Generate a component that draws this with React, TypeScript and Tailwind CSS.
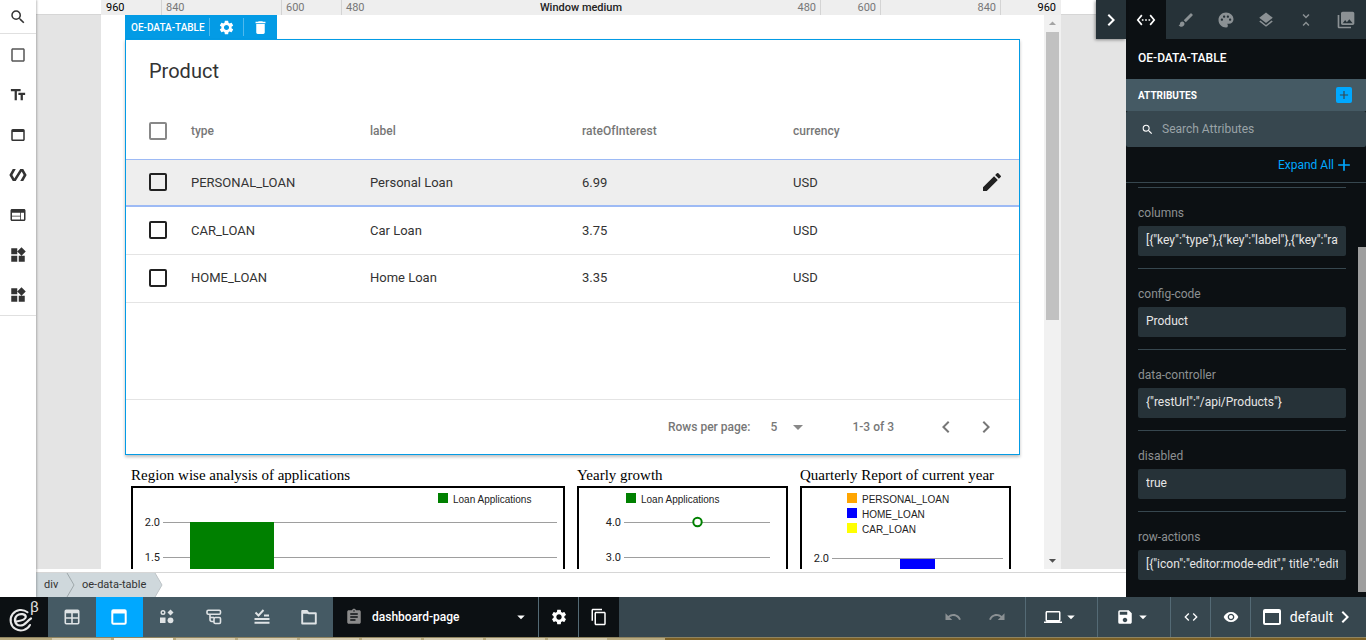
import type { ReactNode } from "react";
import {
  MdAdd,
  MdArrowDropDown,
  MdArrowDropUp,
  MdAssignment,
  MdBrush,
  MdCheckBoxOutlineBlank,
  MdChevronLeft,
  MdChevronRight,
  MdCode,
  MdContentCopy,
  MdDelete,
  MdEdit,
  MdLaptop,
  MdLayers,
  MdPalette,
  MdPhotoLibrary,
  MdPolymer,
  MdRedo,
  MdSave,
  MdSearch,
  MdSettings,
  MdSettingsEthernet,
  MdTextFields,
  MdUndo,
  MdUnfoldLess,
  MdVisibility,
  MdWeb,
  MdWebAsset,
  MdWidgets,
} from "react-icons/md";

const tools: { label: string; icon: ReactNode }[] = [
  { label: "Container", icon: <MdCheckBoxOutlineBlank size={18} className="text-[#555]" /> },
  { label: "Text", icon: <MdTextFields size={18} /> },
  { label: "Panel", icon: <MdWebAsset size={18} /> },
  { label: "Polymer", icon: <MdPolymer size={18} /> },
  { label: "Web", icon: <MdWeb size={18} /> },
  { label: "Widgets", icon: <MdWidgets size={18} /> },
  { label: "More widgets", icon: <MdWidgets size={18} /> },
];

const rows = [
  { type: "PERSONAL_LOAN", label: "Personal Loan", rate: "6.99", currency: "USD", selected: true },
  { type: "CAR_LOAN", label: "Car Loan", rate: "3.75", currency: "USD", selected: false },
  { type: "HOME_LOAN", label: "Home Loan", rate: "3.35", currency: "USD", selected: false },
];

const attributes = [
  { name: "columns", value: '[{"key":"type"},{"key":"label"},{"key":"rateOfInterest"},{"key":"currency"}]' },
  { name: "config-code", value: "Product" },
  { name: "data-controller", value: '{"restUrl":"/api/Products"}' },
  { name: "disabled", value: "true" },
  { name: "row-actions", value: '[{"icon":"editor:mode-edit"," title":"edit","action":"edit"}]' },
];

function ToolRail() {
  return (
    <nav className="z-10 w-9 shrink-0 bg-white text-[#333] shadow-[1px_0_2px_rgba(0,0,0,0.25)]">
      <button aria-label="Search" className="flex h-[34px] w-full items-center justify-center border-b border-[#e0e0e0]">
        <MdSearch size={18} />
      </button>
      <div className="border-b border-[#e0e0e0] pt-px">
        {tools.map((tool) => (
          <button key={tool.label} aria-label={tool.label} className="flex h-10 w-full items-center justify-center">
            {tool.icon}
          </button>
        ))}
      </div>
    </nav>
  );
}

function Ruler() {
  return (
    <div className="h-[15px] shrink-0 bg-white shadow-[inset_0_-1px_0_#d6d6d6]">
      <div className="mx-auto grid h-full max-w-[960px] grid-cols-[60px_120px_60px_1fr_60px_120px_60px] bg-[#eee] text-[11px] leading-[15px] text-[#777]">
        <span className="px-[5px] text-black">960</span>
        <span className="border-l border-[#d4d4d4] px-1">840</span>
        <span className="border-l border-[#d4d4d4] px-1">600</span>
        <span className="flex justify-between border-x border-[#d4d4d4] px-1">
          <span>480</span>
          <span className="font-medium text-[#222]">Window medium</span>
          <span>480</span>
        </span>
        <span className="border-r border-[#d4d4d4] px-1 text-right">600</span>
        <span className="border-r border-[#d4d4d4] px-1 text-right">840</span>
        <span className="px-[5px] text-right text-black">960</span>
      </div>
    </div>
  );
}

const checkboxClass = "block size-[18px] appearance-none rounded-[2px] border-2";

function DataTable() {
  return (
    <section className="border border-[#039be5] bg-white shadow-[0_2px_3px_rgba(0,0,0,0.25)]">
      <h1 className="px-[23px] pt-[17px] text-xl leading-7 text-[#333]">Product</h1>
      <div className="mt-[18px] h-[296px]">
        <table className="w-full table-fixed border-collapse text-left text-[13px] text-[#333]">
          <colgroup>
            <col className="w-[65px]" />
            <col className="w-[179px]" />
            <col className="w-[212px]" />
            <col className="w-[211px]" />
            <col />
            <col className="w-14" />
          </colgroup>
          <thead>
            <tr className="h-14 border-b border-[#9dbaf5] text-xs text-[#777]">
              <th className="pl-[23px]">
                <input type="checkbox" aria-label="Select all rows" className={`${checkboxClass} border-[#888]`} />
              </th>
              <th className="font-medium">type</th>
              <th className="font-medium">label</th>
              <th className="font-medium">rateOfInterest</th>
              <th className="font-medium">currency</th>
              <th />
            </tr>
          </thead>
          <tbody>
            {rows.map((row) => (
              <tr
                key={row.type}
                className={row.selected ? "h-[47px] border-b-2 border-[#9dbaf5] bg-[#eee]" : "h-12 border-b border-[#e4e4e4]"}
              >
                <td className="pl-[23px]">
                  <input type="checkbox" aria-label={`Select ${row.type}`} className={`${checkboxClass} border-[#212121]`} />
                </td>
                <td>{row.type}</td>
                <td>{row.label}</td>
                <td>{row.rate}</td>
                <td>{row.currency}</td>
                <td>
                  {row.selected && (
                    <button aria-label="Edit row" className="ml-auto mr-[15px] block text-[#212121]">
                      <MdEdit size={24} />
                    </button>
                  )}
                </td>
              </tr>
            ))}
          </tbody>
        </table>
      </div>
      <footer className="flex h-[55px] items-center justify-end border-t border-[#e4e4e4] pr-[21px] text-xs font-medium text-[#777]">
        <label htmlFor="page-size">Rows per page:</label>
        <span className="ml-5 flex items-center">
          <select id="page-size" className="w-4 appearance-none bg-transparent">
            <option>5</option>
          </select>
          <MdArrowDropDown size={24} className="text-[#888]" />
        </span>
        <span className="ml-[42px]">1-3 of 3</span>
        <button aria-label="Previous page" className="ml-10">
          <MdChevronLeft size={24} />
        </button>
        <button aria-label="Next page" className="ml-4">
          <MdChevronRight size={24} />
        </button>
      </footer>
    </section>
  );
}

const legendText = { fontFamily: '"Liberation Sans", Arial, sans-serif', fontSize: 10, fill: "#222" };
const axisText = { fontFamily: 'Roboto, Arial, sans-serif', fontSize: 11, fill: "#222", textAnchor: "end" as const };

function ChartCard({ title, children }: { title: string; children: ReactNode }) {
  return (
    <figure className="min-w-0">
      <figcaption className="h-[21px] whitespace-nowrap font-['Liberation_Serif',serif] text-[15px] leading-5 text-black">{title}</figcaption>
      <div className="overflow-hidden border-2 border-black">
        <svg width="430" height="240" className="block max-w-none" aria-label={title}>
          {children}
        </svg>
      </div>
    </figure>
  );
}

function Charts() {
  return (
    <div className="mt-[10px] grid grid-cols-[434fr_211fr_211fr] gap-3 pl-[6px] pr-[9px]">
      <ChartCard title="Region wise analysis of applications">
        <rect x="305" y="5" width="10" height="10" fill="#008000" />
        <text x="320" y="15" {...legendText}>Loan Applications</text>
        <path d="M30 34.5H424M30 69.5H424M30 104.5H424" stroke="#9e9e9e" />
        <rect x="57" y="34" width="84" height="200" fill="#008000" />
        <text x="27" y="38" {...axisText}>2.0</text>
        <text x="27" y="73" {...axisText}>1.5</text>
      </ChartCard>
      <ChartCard title="Yearly growth">
        <rect x="47" y="5" width="10" height="10" fill="#008000" />
        <text x="62" y="15" {...legendText}>Loan Applications</text>
        <path d="M45 34.5H191M45 69.5H191M45 104.5H191" stroke="#9e9e9e" />
        <circle cx="118.5" cy="34" r="4.2" fill="#fff" stroke="#008000" strokeWidth="2" />
        <text x="42" y="38" {...axisText}>4.0</text>
        <text x="42" y="73" {...axisText}>3.0</text>
      </ChartCard>
      <ChartCard title="Quarterly Report of current year">
        <rect x="45" y="5" width="10" height="10" fill="#ffa500" />
        <rect x="45" y="20" width="10" height="10" fill="#0000ff" />
        <rect x="45" y="35" width="10" height="10" fill="#ffff00" />
        <text x="60" y="15" {...legendText}>PERSONAL_LOAN</text>
        <text x="60" y="30" {...legendText}>HOME_LOAN</text>
        <text x="60" y="45" {...legendText}>CAR_LOAN</text>
        <path d="M30 70.5H201" stroke="#9e9e9e" />
        <rect x="98" y="71" width="35" height="150" fill="#0000ff" />
        <text x="27" y="74" {...axisText}>2.0</text>
      </ChartCard>
    </div>
  );
}

function Canvas() {
  return (
    <div className="min-h-0 flex-1 overflow-hidden bg-[#e4e4e4]">
      <div className="mx-auto flex h-full max-w-[960px] bg-white">
        <div className="min-w-0 flex-1 overflow-hidden px-6">
          <div className="flex h-6 w-[152px] items-center bg-[#039be5] text-[10px] font-medium text-white">
            <span className="w-[84px] whitespace-nowrap pl-[6px]">OE-DATA-TABLE</span>
            <button aria-label="Settings" className="flex h-[18px] w-[34px] items-center justify-center border-l border-white/30">
              <MdSettings size={17} />
            </button>
            <button aria-label="Delete" className="flex h-[18px] w-[34px] items-center justify-center border-l border-white/30">
              <MdDelete size={17} />
            </button>
          </div>
          <DataTable />
          <Charts />
        </div>
        <div className="flex w-[17px] shrink-0 flex-col items-center bg-[#f1f1f1]">
          <MdArrowDropUp size={17} className="text-[#a3a3a3]" />
          <div className="h-[288px] w-[13px] bg-[#c1c1c1]" />
          <MdArrowDropDown size={17} className="mt-auto text-[#505050]" />
        </div>
      </div>
    </div>
  );
}

function Breadcrumb() {
  return (
    <div className="mt-[3px] flex h-[25px] shrink-0 border-t border-[#d6d6d6] bg-white text-[11px] text-[#333]">
      <div className="relative flex h-full w-[127px] items-center">
        <svg viewBox="0 0 127 24" className="absolute inset-0 size-full" preserveAspectRatio="none" aria-hidden="true">
          <path d="M0 0H119L126 12L119 24H0Z" fill="#cfd8dc" />
          <path d="M31 0L38 12L31 24" fill="none" stroke="#9ea7aa" />
          <path d="M119 0L126 12L119 24" fill="none" stroke="#bdc3c6" />
        </svg>
        <a href="#div" className="relative w-[38px] pl-2">div</a>
        <a href="#oe-data-table" className="relative whitespace-nowrap pl-2">oe-data-table</a>
      </div>
    </div>
  );
}

const panelTabs: { label: string; icon: ReactNode }[] = [
  { label: "Attributes", icon: <MdSettingsEthernet size={20} /> },
  { label: "Style", icon: <MdBrush size={18} /> },
  { label: "Theme", icon: <MdPalette size={18} /> },
  { label: "Layers", icon: <MdLayers size={18} /> },
  { label: "Collapse", icon: <MdUnfoldLess size={18} /> },
  { label: "Assets", icon: <MdPhotoLibrary size={20} /> },
];

function Inspector() {
  return (
    <aside className="relative flex w-60 shrink-0 flex-col bg-[#0c1013] text-white">
      <button
        aria-label="Collapse panel"
        className="absolute right-full top-0 z-10 flex h-[39px] w-[30px] items-center justify-center bg-[#263238] shadow-[-1px_1px_3px_rgba(0,0,0,0.4)]"
      >
        <MdChevronRight size={24} />
      </button>
      <div className="flex h-[39px] bg-[#263238]">
        {panelTabs.map((tab, i) => (
          <button
            key={tab.label}
            aria-label={tab.label}
            className={
              i === 0
                ? "flex flex-1 items-center justify-center bg-[#0c1013] text-white"
                : "flex flex-1 items-center justify-center text-[#8b9194]"
            }
          >
            {tab.icon}
          </button>
        ))}
      </div>
      <h2 className="flex h-10 items-center px-3 pb-0.5 text-xs font-medium">OE-DATA-TABLE</h2>
      <div className="flex h-8 items-center justify-between bg-[#455a64] pl-3 pr-[14px] text-[10px] font-bold">
        <span>ATTRIBUTES</span>
        <button aria-label="Add attribute" className="flex size-4 items-center justify-center rounded-[2px] bg-[#00a8ff] text-[#37474f]">
          <MdAdd size={14} />
        </button>
      </div>
      <label className="flex h-9 items-center rounded-[2px] bg-[#37474f] pl-[15px]">
        <MdSearch size={13} />
        <input
          type="text"
          placeholder="Search Attributes"
          aria-label="Search attributes"
          className="ml-2 w-40 bg-transparent text-xs outline-none placeholder:text-[#9aa3a7]"
        />
      </label>
      <div className="flex h-9 items-center justify-end border-b border-[#37474f] pr-3">
        <button className="flex items-center text-xs text-[#00a8ff]">
          Expand All
          <MdAdd size={20} />
        </button>
      </div>
      <div className="flex min-h-0 flex-1 overflow-hidden">
        <div className="min-w-0 flex-1 pl-3 pr-3 pt-1">
          {attributes.map((attr) => (
            <div key={attr.name} className="border-t border-[#37474f] pb-3 pt-[17px]">
              <label htmlFor={attr.name} className="mb-[5px] block text-xs leading-4 text-[#8d9092]">
                {attr.name}
              </label>
              <input
                id={attr.name}
                type="text"
                defaultValue={attr.value}
                className="block h-[30px] w-full rounded-[2px] bg-[#263238] px-2 pb-0.5 text-xs text-[#e6e6e6] outline-none"
              />
            </div>
          ))}
        </div>
        <div className="flex w-2 flex-col pb-[5px] pt-16">
          <div className="flex-1 bg-[#9e9e9e]" />
        </div>
      </div>
    </aside>
  );
}

function Logo() {
  return (
    <svg width="48" height="40" viewBox="0 0 48 40" aria-label="oe logo">
      <g fill="none" stroke="#e8e8e8" strokeLinecap="round">
        <path d="M27.500 15.300A10.300 10.300 0 1 0 30 28" strokeWidth="2" />
        <path
          d="M16.500 24.500C20 24 25.500 22.800 25.800 20C25.800 17 20 16 17 18.500C13.500 21.500 14.500 28 20 28.500C25.500 28.800 26.500 24 31 21.500"
          strokeWidth="2.200"
        />
      </g>
      <text x="30" y="15" fontSize="15" fill="#e0e0e0" fontFamily="Roboto, sans-serif">β</text>
    </svg>
  );
}

function ModeIcon({ children }: { children: ReactNode }) {
  return (
    <svg width="16" height="16" viewBox="0 0 16 16" fill="none" stroke="currentColor" strokeWidth="1.6" aria-hidden="true">
      {children}
    </svg>
  );
}

const modes: { label: string; icon: ReactNode }[] = [
  {
    label: "Grid",
    icon: (
      <ModeIcon>
        <rect x="1.300" y="1.300" width="13.400" height="13.400" rx="1" />
        <path d="M1 3H15" strokeWidth="2.600" />
        <path d="M8 3V15M1 9H15" />
      </ModeIcon>
    ),
  },
  {
    label: "Page",
    icon: (
      <ModeIcon>
        <rect x="1.300" y="1.300" width="13.400" height="13.400" rx="1" strokeWidth="2" />
        <path d="M1 3H15" strokeWidth="3" />
      </ModeIcon>
    ),
  },
  {
    label: "Components",
    icon: (
      <ModeIcon>
        <circle cx="4" cy="3.500" r="1.800" strokeWidth="1.400" />
        <path d="M11.500 0.500L14.500 3.500L11.500 6.500L8.500 3.500Z" fill="currentColor" stroke="none" />
        <rect x="1" y="8.500" width="5.500" height="5.500" fill="currentColor" stroke="none" />
        <circle cx="11.500" cy="11.300" r="2.900" fill="currentColor" stroke="none" />
      </ModeIcon>
    ),
  },
  {
    label: "Tree",
    icon: (
      <ModeIcon>
        <rect x="1" y="1.200" width="13.500" height="4" rx="1.200" />
        <path d="M4 5.200V10.500Q4 12.500 6 12.500H8" />
        <path d="M4 8.500H8" />
        <rect x="8" y="8.500" width="6.500" height="6" rx="1.200" />
      </ModeIcon>
    ),
  },
  {
    label: "Rules",
    icon: (
      <ModeIcon>
        <path d="M1.500 3.500L4.500 6.500L9.500 1M10 6.500H15M0.500 10H15.500M0.500 13.800H15.500" strokeWidth="1.900" />
      </ModeIcon>
    ),
  },
  {
    label: "Files",
    icon: (
      <ModeIcon>
        <path d="M1.200 2H6L7.500 4.200H14.800V14.500H1.200Z" strokeWidth="1.900" strokeLinejoin="round" />
        <path d="M1.200 3.500H7" strokeWidth="2.500" />
      </ModeIcon>
    ),
  },
];

const cell = "flex h-full items-center justify-center border-l border-[#546a75]";

function BottomBar() {
  return (
    <div className="flex h-10 shrink-0 bg-[#37474f] text-white">
      <div className="w-12 bg-[#0c1013]">
        <Logo />
      </div>
      <div className="flex w-[285px] bg-[#455a64]">
        {modes.map((mode) => (
          <button
            key={mode.label}
            aria-label={mode.label}
            className={
              mode.label === "Page"
                ? "flex flex-1 items-center justify-center bg-[#00a8ff]"
                : "flex flex-1 items-center justify-center text-[#dfe3e5]"
            }
          >
            {mode.icon}
          </button>
        ))}
      </div>
      <div className="flex bg-[#0c1013]">
        <div className="relative flex w-[205px] items-center pl-3">
          <MdAssignment size={18} className="text-[#8b8b8b]" />
          <select aria-label="Page" className="h-full flex-1 appearance-none bg-[#0c1013] pl-[9px] text-xs font-medium outline-none">
            <option>dashboard-page</option>
          </select>
          <MdArrowDropDown size={18} className="pointer-events-none absolute right-2" />
        </div>
        <button aria-label="Page settings" className={`${cell} w-10`}>
          <MdSettings size={18} />
        </button>
        <button aria-label="Copy page" className={`${cell} w-[41px]`}>
          <MdContentCopy size={18} />
        </button>
      </div>
      <div className="ml-auto flex items-center">
        <button aria-label="Undo" className="flex w-11 justify-center text-[#8b9194]">
          <MdUndo size={18} />
        </button>
        <button aria-label="Redo" className="mr-[6px] flex w-11 justify-center text-[#8b9194]">
          <MdRedo size={18} />
        </button>
        <button aria-label="Device" className={`${cell} w-[72px]`}>
          <MdLaptop size={18} />
          <MdArrowDropDown size={18} />
        </button>
        <button aria-label="Save" className={`${cell} w-[73px]`}>
          <MdSave size={18} />
          <MdArrowDropDown size={18} />
        </button>
        <button aria-label="Code" className={`${cell} w-10`}>
          <MdCode size={16} />
        </button>
        <button aria-label="Preview" className={`${cell} w-10`}>
          <MdVisibility size={16} />
        </button>
        <button className={`${cell} w-[116px] text-sm`}>
          <MdWebAsset size={24} />
          <span className="ml-1.5">default</span>
          <MdChevronRight size={24} />
        </button>
      </div>
    </div>
  );
}

function TaskStrip() {
  return (
    <div className="flex h-[3px] shrink-0 border-t border-[#8f8460] bg-[#7d6228]">
      <div className="flex w-[665px] gap-[3px] bg-[#b8aa80] pl-[52px]">
        {[0, 1, 2, 3, 4, 5, 6, 7, 8].map((slot) => (
          <div key={slot} className={slot === 1 ? "w-[59px] bg-[#f7f3e6]" : "w-[59px] bg-[#d6ccb0]"} />
        ))}
      </div>
    </div>
  );
}

export default function App() {
  return (
    <div className="flex h-screen w-full flex-col overflow-hidden bg-white font-[Roboto,sans-serif]">
      <div className="flex min-h-0 flex-1">
        <ToolRail />
        <main className="flex min-w-0 flex-1 flex-col bg-white">
          <Ruler />
          <Canvas />
          <Breadcrumb />
        </main>
        <Inspector />
      </div>
      <BottomBar />
      <TaskStrip />
    </div>
  );
}
